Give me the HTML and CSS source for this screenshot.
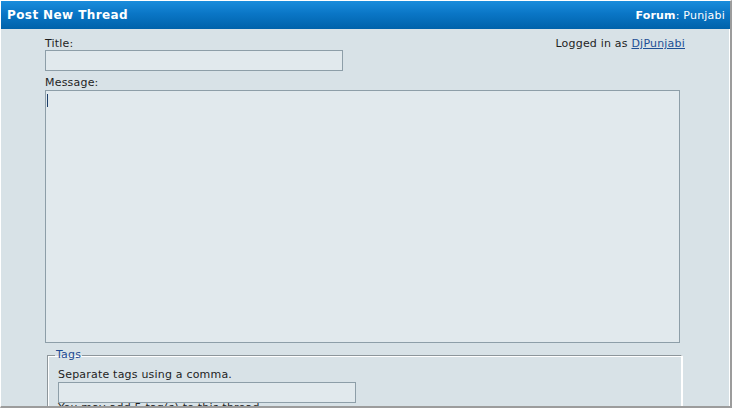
FILE: index.html
```html
<!DOCTYPE html>
<html>
<head>
<meta charset="utf-8">
<link rel="stylesheet" href="styles.css">
</head>
<body>
<div class="window">
  <div class="titlebar">
    <span class="title">Post New Thread</span>
    <span class="forum"><b>Forum</b>: Punjabi</span>
  </div>
  <div class="panel">
    <div class="top-row">
      <div class="field">
        <label class="lbl">Title:</label>
        <div class="input"></div>
      </div>
      <div class="logged">Logged in as <a href="#">DjPunjabi</a></div>
    </div>
    <label class="lbl msg-lbl">Message:</label>
    <div class="textarea"><span class="caret"></span></div>
    <fieldset class="tags">
      <legend>Tags</legend>
      <div class="hint">Separate tags using a comma.</div>
      <div class="input"></div>
      <div class="hint last">You may add 5 tag(s) to this thread.</div>
    </fieldset>
  </div>
</div>
</body>
</html>
```
FILE: styles.css
```css
html, body {
  margin: 0;
  padding: 0;
  height: 100%;
  overflow: hidden;
}
body {
  font-family: "DejaVu Sans", Verdana, sans-serif;
  font-size: 11px;
  letter-spacing: 0.2px;
  color: #1e1e1e;
  background: #d8e2e7;
}
.window {
  box-sizing: border-box;
  height: 408px;
  width: 732px;
  border-top: 1px solid #ffffff;
  border-left: 1px solid #ffffff;
  border-right: 2px solid #9c9c9c;
  border-bottom: 2px solid #9c9c9c;
  box-shadow: inset -1px 0 0 #ffffff;
  background: #d8e2e7;
  overflow: hidden;
}
.titlebar {
  height: 28px;
  display: flex;
  align-items: center;
  justify-content: space-between;
  padding: 0 5px 0 6px;
  background: linear-gradient(#1a8ddc 0%, #0a76c6 45%, #0062aa 100%);
  color: #ffffff;
}
.title {
  font-weight: bold;
  font-size: 12px;
  letter-spacing: 0.4px;
}
.forum {
  font-size: 11px;
}
.panel {
  padding: 6px 45px 0 44px;
}
.top-row {
  display: flex;
  justify-content: space-between;
  align-items: flex-start;
}
.lbl {
  display: block;
  line-height: 13px;
  padding-top: 2px;
}
.logged {
  line-height: 13px;
  padding-top: 2px;
}
.logged a {
  color: #1c4f95;
}
.input {
  box-sizing: border-box;
  width: 298px;
  height: 21px;
  border: 1px solid #8d9ea8;
  background: #e1e9ed;
}
.msg-lbl {
  margin-top: 3px;
  margin-bottom: 1px;
}
.textarea {
  box-sizing: border-box;
  width: 635px;
  height: 253px;
  border: 1px solid #8d9ea8;
  background: #e1e9ed;
  padding: 3px 0 0 1px;
}
.caret {
  display: block;
  width: 1px;
  height: 13px;
  background: #1c3f6a;
}
.tags {
  box-sizing: border-box;
  width: 635px;
  margin: 5px 0 0 2px;
  padding: 5px 9px 0 10px;
  border-color: #8d969b #ffffff #ffffff #8d969b;
  border-style: solid;
  border-width: 1px;
  box-shadow: inset 1px 1px 0 #ffffff, 1px 1px 0 #ffffff;
  height: 80px;
}
.tags legend {
  color: #1d4a92;
  padding: 0 1px;
  margin-left: -3px;
  line-height: 14px;
}
.hint {
  line-height: 14px;
  margin-top: 1px;
}
.hint.last {
  margin-top: -2px;
}
```
